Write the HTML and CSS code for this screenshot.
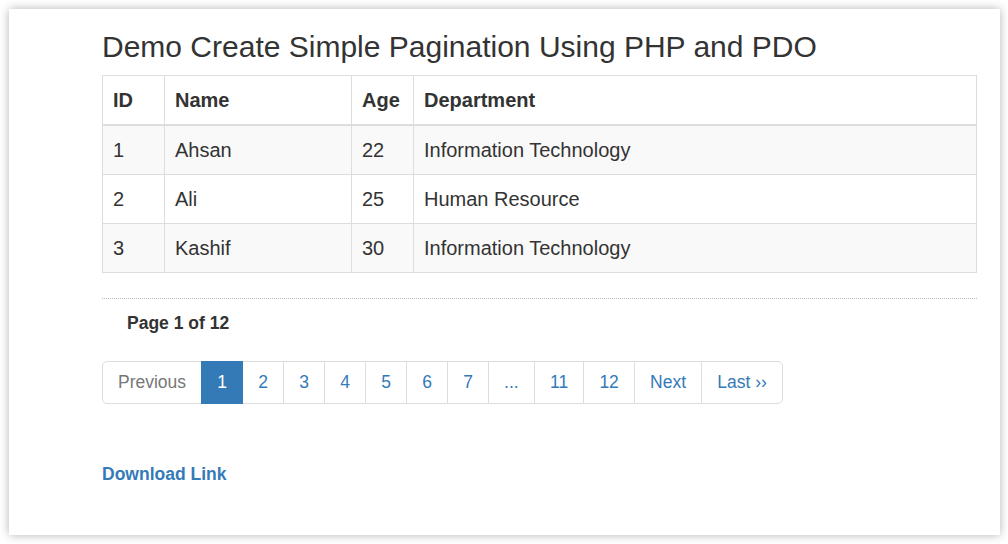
FILE: index.html
```html
<!DOCTYPE html>
<html lang="en">
<head>
<meta charset="utf-8">
<title>Demo Create Simple Pagination Using PHP and PDO</title>
<link rel="stylesheet" href="styles.css">
</head>
<body>
<div class="card">
  <h3 class="title">Demo Create Simple Pagination Using PHP and PDO</h3>
  <table class="data">
    <colgroup>
      <col class="c-id"><col class="c-name"><col class="c-age"><col>
    </colgroup>
    <thead>
      <tr><th>ID</th><th>Name</th><th>Age</th><th>Department</th></tr>
    </thead>
    <tbody>
      <tr><td>1</td><td>Ahsan</td><td>22</td><td>Information Technology</td></tr>
      <tr><td>2</td><td>Ali</td><td>25</td><td>Human Resource</td></tr>
      <tr><td>3</td><td>Kashif</td><td>30</td><td>Information Technology</td></tr>
    </tbody>
  </table>
  <hr class="sep">
  <div class="page-info">Page 1 of 12</div>
  <ul class="pagination">
    <li class="disabled"><a>Previous</a></li>
    <li class="active"><a>1</a></li>
    <li><a href="#">2</a></li>
    <li><a href="#">3</a></li>
    <li><a href="#">4</a></li>
    <li><a href="#">5</a></li>
    <li><a href="#">6</a></li>
    <li><a href="#">7</a></li>
    <li><a>...</a></li>
    <li><a href="#">11</a></li>
    <li><a href="#">12</a></li>
    <li><a href="#">Next</a></li>
    <li><a href="#">Last &rsaquo;&rsaquo;</a></li>
  </ul>
  <a class="download" href="#">Download Link</a>
</div>
</body>
</html>
```

FILE: styles.css
```css
* { box-sizing: border-box; }
html, body { margin: 0; padding: 0; background: #fff; }
body {
  font-family: "Liberation Sans", Arial, Helvetica, sans-serif;
  color: #333;
}
.card {
  margin: 9px;
  width: 991px;
  height: 526px;
  background: #fff;
  box-shadow: 0 0 9px rgba(0, 0, 0, 0.3);
  padding: 21px 23px 0 93px;
}
.title {
  margin: 0 0 12px 0;
  font-size: 30px;
  line-height: 33px;
  font-weight: 400;
  color: #333;
}
.data {
  width: 875px;
  border-collapse: collapse;
  table-layout: fixed;
  font-size: 20px;
  line-height: 28px;
  margin-bottom: 25px;
}
.c-id { width: 62px; }
.c-name { width: 187px; }
.c-age { width: 62px; }
.data th, .data td {
  border: 1px solid #ddd;
  padding: 10px;
  text-align: left;
  vertical-align: top;
}
.data th { font-weight: 700; border-bottom-width: 2px; }
.data tbody tr:nth-child(odd) { background: #f9f9f9; }
.sep {
  margin: 0;
  border: 0;
  border-top: 1px dotted #bbb;
  height: 0;
}
.page-info {
  margin-top: 12px;
  padding-left: 25px;
  font-size: 17.5px;
  line-height: 25px;
  font-weight: 700;
}
.pagination {
  display: flex;
  list-style: none;
  margin: 25px 0 0 0;
  padding: 0;
  font-size: 17.5px;
  line-height: 25px;
}
.pagination li a {
  display: block;
  padding: 8px 15.13px;
  border: 1px solid #ddd;
  margin-left: -1px;
  color: #337ab7;
  text-decoration: none;
  background: #fff;
}
.pagination li:first-child a {
  margin-left: 0;
  padding: 8px 15px;
  border-radius: 5px 0 0 5px;
}
.pagination li:last-child a { border-radius: 0 5px 5px 0; }
.pagination li.disabled a { color: #777; }
.pagination li.active a {
  background: #337ab7;
  border-color: #337ab7;
  color: #fff;
  position: relative;
  z-index: 1;
}
.download {
  display: inline-block;
  margin-top: 58px;
  font-size: 17.5px;
  line-height: 25px;
  font-weight: 700;
  color: #337ab7;
  text-decoration: none;
}
```
